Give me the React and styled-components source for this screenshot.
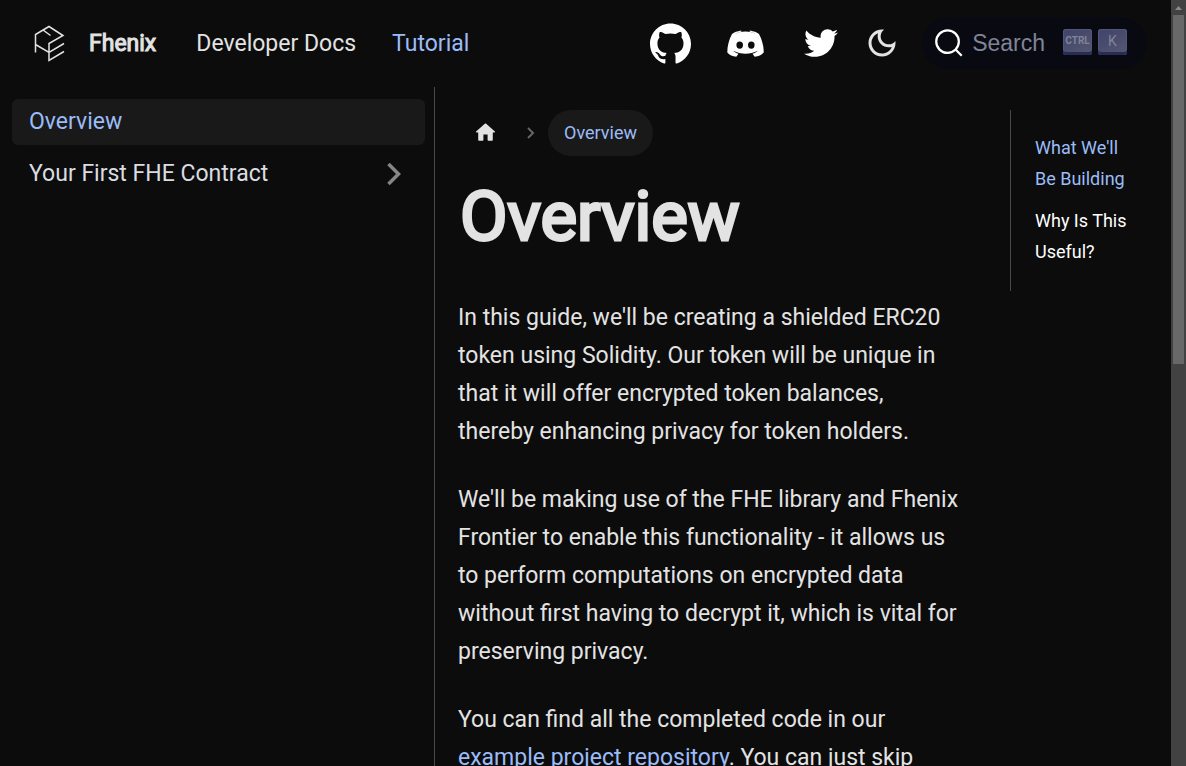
import React from 'react';
import styled, { createGlobalStyle } from 'styled-components';
import { SiGithub } from 'react-icons/si';
import { FaTwitter } from 'react-icons/fa';

const Global = createGlobalStyle`
  *, *::before, *::after { box-sizing: border-box; }
  html, body { margin: 0; background: #0c0c0c; }
  body { font-family: Roboto, "Liberation Sans", sans-serif; font-size: 23px; line-height: 38px; color: #e3e3e3; }
`;

const Shell = styled.div`
  display: flex;
  height: 100vh;
  overflow: hidden;
`;

const Page = styled.div`
  flex: 1;
  min-width: 0;
  display: flex;
  flex-direction: column;
`;

const Navbar = styled.header`
  flex: none;
  display: flex;
  align-items: center;
  height: 87px;
  padding: 0 24px 0 32px;
`;

const Brand = styled.a`
  display: flex;
  align-items: center;
  gap: 21px;
  margin-right: 22px;
  color: #e3e3e3;
  -webkit-text-stroke: 1px #e3e3e3;
  text-decoration: none;
`;

const NavLink = styled.a`
  padding: 0 18px;
  color: ${(p) => (p.$active ? '#9bbcf8' : '#e3e3e3')};
  text-decoration: none;
`;

const Actions = styled.div`
  display: flex;
  align-items: center;
  margin-left: auto;
  padding-bottom: 1px;
`;

const SocialLink = styled.a`
  display: flex;
  justify-content: center;
  width: 75px;
  color: #fff;
`;

const ThemeButton = styled.button`
  display: flex;
  justify-content: center;
  width: 48px;
  padding: 0;
  border: 0;
  margin-right: 16px;
  background: none;
  color: #e3e3e3;
`;

const SearchButton = styled.button`
  display: flex;
  align-items: center;
  height: 52px;
  padding: 0 14px 0 12px;
  border: 0;
  border-radius: 26px;
  background: #090a11;
  color: #7f8497;
  font: 23px/38px "Liberation Sans", Arial, sans-serif;
`;

const SearchLabel = styled.span`
  margin: 0 18px 0 8px;
`;

const Keys = styled.span`
  display: flex;
  padding-bottom: 2px;
`;

const Key = styled.kbd`
  display: flex;
  align-items: center;
  justify-content: center;
  width: 29px;
  height: 26px;
  margin-right: 6px;
  padding-bottom: 2px;
  border-radius: 3px;
  background: linear-gradient(-26deg, #565872, #40426a);
  box-shadow: inset 0 -3px 0 #282d55, inset 0 0 1px 1px #51577d;
  color: #7f8497;
  font: ${(p) => (p.$narrow ? '700 10px/22px' : '400 14px/22px')} Roboto, sans-serif;
`;

const Body = styled.div`
  flex: 1;
  min-height: 0;
  display: flex;
`;

const Sidebar = styled.nav`
  flex: none;
  width: 435px;
  padding: 12px 9px 0 12px;
  border-right: 1px solid #444950;
`;

const Menu = styled.ul`
  display: flex;
  flex-direction: column;
  gap: 6px;
  margin: 0;
  padding: 0;
  list-style: none;
`;

const MenuLink = styled.a`
  display: flex;
  align-items: center;
  justify-content: space-between;
  height: 46px;
  padding: 0 23px 0 17px;
  border-radius: 6px;
  background: ${(p) => (p.$active ? '#191919' : 'transparent')};
  color: ${(p) => (p.$active ? '#9bbcf8' : '#dadde1')};
  text-decoration: none;
`;

const Main = styled.main`
  flex: 1;
  min-width: 0;
  display: flex;
  padding: 23px 24px 0 23px;
`;

const Article = styled.article`
  flex: 1;
  min-width: 0;
  padding-right: 46px;
`;

const Crumbs = styled.ul`
  display: flex;
  align-items: center;
  height: 46px;
  margin: 0 0 23px;
  padding: 0;
  list-style: none;
  font-size: 18px;
`;

const Crumb = styled.li`
  display: flex;
  align-items: center;
`;

const HomeLink = styled.a`
  display: flex;
  padding: 0 15px;
  color: #e3e3e3;
`;

const CrumbArrow = styled.svg`
  margin: 0 12px;
`;

const CrumbCurrent = styled.span`
  padding: 4px 16px;
  border-radius: 23px;
  background: #191919;
  color: #9bbcf8;
`;

const Title = styled.h1`
  margin: 0 0 45px;
  padding-left: 2px;
  font-size: 69px;
  line-height: 75px;
  font-weight: 400;
  -webkit-text-stroke: 3px #e3e3e3;
`;

const Paragraph = styled.p`
  margin: 0 0 30px;
`;

const TextLink = styled.a`
  color: #9bbcf8;
  text-decoration: none;
`;

const Toc = styled.nav`
  flex: none;
  align-self: flex-start;
  width: 137px;
  padding: 22px 12px 24px 24px;
  border-left: 1px solid #444950;
`;

const TocList = styled.ul`
  display: flex;
  flex-direction: column;
  gap: 11px;
  margin: 0;
  padding: 0;
  list-style: none;
  font-size: 18px;
  line-height: 31px;
`;

const TocLink = styled.a`
  color: ${(p) => (p.$active ? '#9bbcf8' : '#fff')};
  text-decoration: none;
`;

const ScrollTrack = styled.div`
  flex: none;
  width: 15px;
  padding: 0 2px;
  background: #424242;
`;

const ScrollArrow = styled.svg`
  display: block;
  width: 11px;
  height: 15px;
`;

const ScrollThumb = styled.div`
  height: 349px;
  background: #686868;
`;

const Logo = () => (
  <svg width="36" height="40" viewBox="32 24 36 40" fill="none" stroke="#e3e3e3" strokeWidth="1.5" aria-hidden="true">
    <path d="M35.500 52.500V34.500L49 26.500L63 35.500L49 43.500V60.500L64 51.500M35.500 44.500L49 52.500L64 43.500M43 30L50.500 35.500" />
  </svg>
);

const Discord = () => (
  <svg width="37" height="27" viewBox="0 0 37 27" aria-hidden="true">
    <path fill="#fff" fillRule="evenodd" d="M5 4C7.500 2.200 10 1.300 14 .5L14.500 1.500C11.500 2.200 9.500 3.200 8 4.300L10 3.300C12 2.200 14 1.500 18.500 1.500S25 2.200 27 3.300L29 4.300C27.500 3.200 25.500 2.200 22.500 1.500L23 .5C27 1.300 29.500 2.200 32 4C35 9.500 36.800 16 36.700 22.500C34.500 25 31.500 26.500 27.700 26.700L25.500 23.700C27.700 23.200 29.500 22.200 30.800 20.800C23 24.800 14 24.800 6.200 20.800C7.500 22.200 9.300 23.200 11.500 23.700L9.300 26.700C5.500 26.500 2.500 25 .3 22.500C.2 16 2 9.500 5 4ZM12.700 11.500A3.300 3.600 0 1 0 12.700 18.700A3.300 3.600 0 1 0 12.700 11.500ZM24.300 11.500A3.300 3.600 0 1 0 24.300 18.700A3.300 3.600 0 1 0 24.300 11.500Z" />
  </svg>
);

const Moon = () => (
  <svg width="36" height="36" viewBox="0 0 24 24" aria-hidden="true">
    <path fill="currentColor" d="M9.37,5.51C9.19,6.15,9.1,6.82,9.1,7.5c0,4.08,3.32,7.4,7.4,7.4c0.68,0,1.35-0.09,1.99-0.27C17.45,17.19,14.93,19,12,19 c-3.86,0-7-3.14-7-7C5,9.07,6.81,6.55,9.37,5.51z M12,3c-4.97,0-9,4.03-9,9s4.03,9,9,9s9-4.03,9-9c0-0.46-0.04-0.92-0.1-1.36 c-0.98,1.37-2.58,2.26-4.4,2.26c-2.98,0-5.4-2.42-5.4-5.4c0-1.81,0.89-3.42,2.26-4.4C12.92,3.04,12.46,3,12,3L12,3z" />
  </svg>
);

export default function App() {
  return (
    <>
      <Global />
      <Shell>
        <Page>
          <Navbar>
            <Brand href="#"><Logo /><span>Fhenix</span></Brand>
            <NavLink href="#">Developer Docs</NavLink>
            <NavLink href="#" $active>Tutorial</NavLink>
            <Actions>
              <SocialLink href="#" aria-label="GitHub"><SiGithub size={41} /></SocialLink>
              <SocialLink href="#" aria-label="Discord"><Discord /></SocialLink>
              <SocialLink href="#" aria-label="Twitter"><FaTwitter size={34} /></SocialLink>
              <ThemeButton aria-label="Switch theme"><Moon /></ThemeButton>
              <SearchButton>
                <svg width="30" height="30" viewBox="0 0 20 20" fill="none" stroke="#fff" strokeWidth="1.5" strokeLinecap="round" aria-hidden="true">
                  <path d="M14.386 14.386l4.088 4.088-4.088-4.088A7.533 7.533 0 1 1 3.733 3.733a7.533 7.533 0 0 1 10.653 10.653z" />
                </svg>
                <SearchLabel>Search</SearchLabel>
                <Keys>
                  <Key $narrow>CTRL</Key>
                  <Key>K</Key>
                </Keys>
              </SearchButton>
            </Actions>
          </Navbar>
          <Body>
            <Sidebar aria-label="Docs">
              <Menu>
                <li><MenuLink href="#" $active>Overview</MenuLink></li>
                <li>
                  <MenuLink href="#">
                    Your First FHE Contract
                    <svg width="15" height="23" viewBox="0 1 15 23" fill="none" stroke="#868686" strokeWidth="3.500" aria-hidden="true">
                      <path d="M1.500 2L11.500 12L1.500 22" />
                    </svg>
                  </MenuLink>
                </li>
              </Menu>
            </Sidebar>
            <Main>
              <Article>
                <Crumbs aria-label="Breadcrumbs">
                  <Crumb>
                    <HomeLink href="#" aria-label="Home">
                      <svg width="25" height="25" viewBox="0 1 24 24" fill="currentColor" aria-hidden="true">
                        <path d="M10 19v-5h4v5c0 .55.45 1 1 1h3c.55 0 1-.45 1-1v-7h1.700c.46 0 .68-.57.33-.87L12.670 3.600c-.38-.34-.96-.34-1.340 0l-8.360 7.530c-.34.3-.13.870.330.870H5v7c0 .55.45 1 1 1h3c.55 0 1-.45 1-1z" />
                      </svg>
                    </HomeLink>
                  </Crumb>
                  <Crumb>
                    <CrumbArrow width="11" height="14" viewBox="0 0 11 14" fill="none" stroke="#666" strokeWidth="2" aria-hidden="true">
                      <path d="M3 2L8 7L3 12" />
                    </CrumbArrow>
                    <CrumbCurrent>Overview</CrumbCurrent>
                  </Crumb>
                </Crumbs>
                <Title>Overview</Title>
                <Paragraph>
                  In this guide, we'll be creating a shielded ERC20 token using Solidity. Our token will be unique in
                  that it will offer encrypted token balances, thereby enhancing privacy for token holders.
                </Paragraph>
                <Paragraph>
                  We'll be making use of the FHE library and Fhenix Frontier to enable this functionality - it allows
                  us to perform computations on encrypted data without first having to decrypt it, which is vital for
                  preserving privacy.
                </Paragraph>
                <Paragraph>
                  You can find all the completed code in our <TextLink href="#">example project repository</TextLink>.
                  You can just skip
                </Paragraph>
              </Article>
              <Toc aria-label="On this page">
                <TocList>
                  <li><TocLink href="#" $active>What We'll Be Building</TocLink></li>
                  <li><TocLink href="#">Why Is This Useful?</TocLink></li>
                </TocList>
              </Toc>
            </Main>
          </Body>
        </Page>
        <ScrollTrack aria-hidden="true">
          <ScrollArrow viewBox="0 0 11 15"><path d="M2 10H9L5.500 6Z" fill="#8a8a8a" /></ScrollArrow>
          <ScrollThumb />
        </ScrollTrack>
      </Shell>
    </>
  );
}
